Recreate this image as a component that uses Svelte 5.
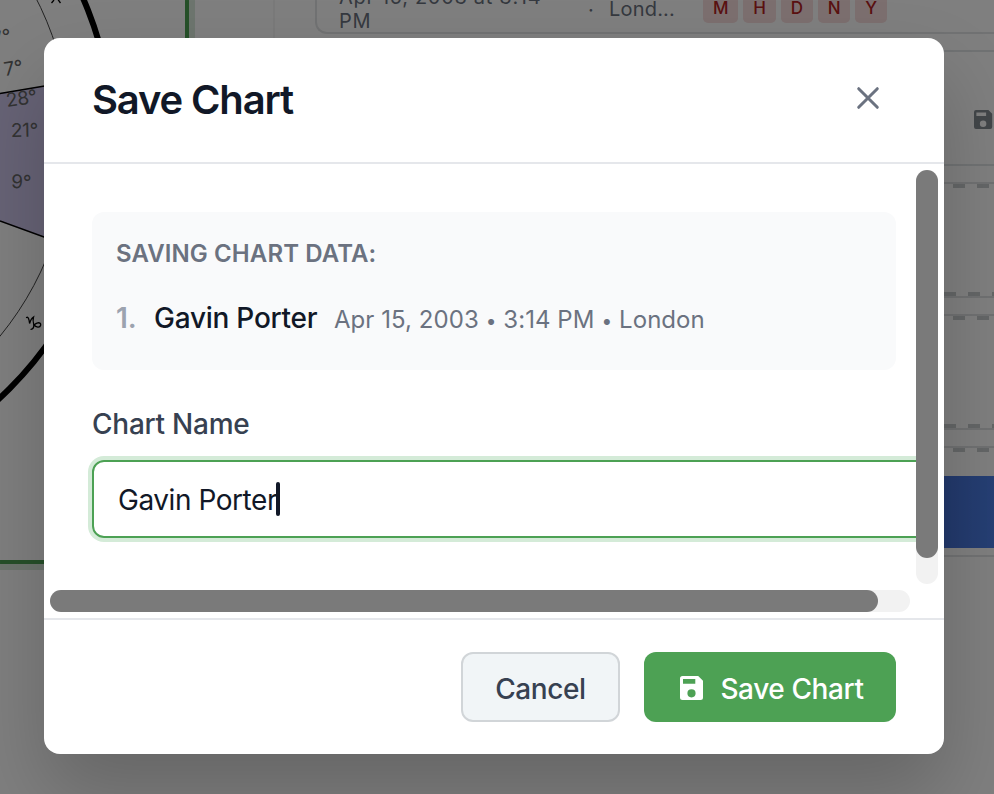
<script>
  let chartName = $state('Gavin Porter');
  const levels = ['M', 'H', 'D', 'N', 'Y'];
  const degrees = [
    { x: -6, y: 46, t: '7°', r: -14 },
    { x: 5, y: 76, t: '7°', r: -9 },
    { x: 7, y: 107, t: '28°', r: -8 },
    { x: 11, y: 137, t: '21°', r: -1 },
    { x: 11, y: 188, t: '9°', r: 2 }
  ];
</script>

{#snippet disk()}
  <svg class="disk" viewBox="0 0 24 24" aria-hidden="true">
    <path fill="currentColor" fill-rule="evenodd" d="M2.500 0h15.700L23 4.800V21.500a2.500 2.500 0 0 1-2.500 2.500h-18A2.500 2.500 0 0 1 0 21.500v-19A2.500 2.500 0 0 1 2.500 0Zm.5 3v4.700h12.300V3Zm8.500 10.200a4.100 4.100 0 1 0 0 8.200 4.100 4.100 0 0 0 0-8.200Z" />
  </svg>
{/snippet}

<div class="screen">
  <div class="page">
    <section class="wheel">
      <svg width="185" height="560" viewBox="0 0 185 560">
        <path d="M0 93 44 86 92 78V254L44 237 0 221Z" fill="#cec6ed" />
        <path d="M0 93.500 92 78M0 221l92 33.500" stroke="#000" stroke-width="1.5" fill="none" />
        <circle cx="-239.3" cy="139.7" r="309.6" fill="none" stroke="#444" stroke-width="1" />
        <circle cx="-239.3" cy="139.7" r="352" fill="none" stroke="#000" stroke-width="6" />
        {#each degrees as d}
          <text x={d.x} y={d.y} transform="rotate({d.r} {d.x} {d.y})">{d.t}</text>
        {/each}
        <path d="M51.500 3 54 0M60.500 3 58-.5M53-1h7" fill="none" stroke="#000" stroke-width="1.3" />
        <path d="M26.500 317.500Q28.800 316 29.600 323.500Q31 318.500 33.500 317Q32.500 320 33.800 325Q34 329 31 329.300M33.800 326C35 322.300 41 321.500 40.700 325C40 328.300 36 327.500 33.800 324.500" fill="none" stroke="#000" stroke-width="1.3" stroke-linecap="round" />
      </svg>
    </section>
    <section class="side">
      <div class="entry">
        <span class="when">Apr 15, 2003 at 3:14 PM</span>
        <span class="sep">·</span>
        <span class="place">Lond...</span>
        <span class="tags">{#each levels as l}<b>{l}</b>{/each}</span>
      </div>
      <div class="tools">{@render disk()}</div>
      <div class="slot"></div>
      <div class="slot"></div>
      <div class="slot last"></div>
      <div class="action"></div>
      <div class="rule"></div>
    </section>
  </div>

  <div class="overlay">
    <div class="modal" role="dialog" aria-label="Save Chart">
      <header>
        <h2>Save Chart</h2>
        <button class="close" aria-label="Close">
          <svg width="24" height="24" viewBox="0 0 24 24"><path d="M2.700 2.700 21.300 21.300M21.300 2.700 2.700 21.300" stroke="#6b7280" stroke-width="3" stroke-linecap="round" /></svg>
        </button>
      </header>
      <div class="body">
        <div class="content">
          <div class="summary">
            <div class="caption">SAVING CHART DATA:</div>
            <div class="row">
              <span class="num">1.</span>
              <span class="name">Gavin Porter</span>
              <span class="info">Apr 15, 2003 <em>•</em> 3:14 PM <em>•</em> London</span>
            </div>
          </div>
          <div class="label">Chart Name</div>
          <div class="field"><span>{chartName}</span><i></i></div>
        </div>
        <div class="vbar"><div></div></div>
        <div class="hbar"><div></div></div>
      </div>
      <footer>
        <button class="cancel"><span>Cancel</span></button>
        <button class="save">{@render disk()}<span>Save Chart</span></button>
      </footer>
    </div>
  </div>
</div>

<style>
  :global(body) { margin: 0; }
  .screen, .screen * { box-sizing: border-box; }
  .screen { position: relative; width: 994px; height: 794px; overflow: hidden; font-family: Inter, "Liberation Sans", sans-serif; }
  button { font: inherit; padding: 0; border: 0; background: none; }
  svg { display: block; flex: none; }

  .page { display: flex; height: 794px; background: #fff; }
  .wheel { width: 189px; height: 564px; border: solid #4ca153; border-width: 0 4px 4px 0; box-shadow: 0 0 0 6px #dbeadd; flex: none; }
  .wheel text { font-size: 19px; letter-spacing: -.3px; fill: #666; }
  .side { width: 721px; flex: none; margin-left: 84px; border-left: 2px solid #f4f4f4; height: 558px; }
  .entry { display: flex; align-items: flex-start; height: 34px; margin-left: 40px; border: solid #e3e5e6; border-width: 0 0 2px 2px; border-radius: 0 0 0 12px; font-size: 20px; line-height: 24px; color: #6b7280; letter-spacing: .4px; }
  .when { width: 215px; margin: -15px 31px 0 22px; flex: none; letter-spacing: .7px; }
  .sep { margin: -2px 0 0 3px; width: 21px; flex: none; }
  .place { margin-top: -3px; width: 93px; flex: none; letter-spacing: .2px; }
  .tags { display: flex; gap: 5px; margin-left: 1px; }
  .tags b { display: block; height: 23px; padding: 0 9.9px; line-height: 17px; font-size: 17px; font-weight: 500; letter-spacing: 0; color: #b42323; background: #f9dede; border-radius: 0 0 5px 5px; }
  .tools { display: flex; align-items: flex-start; height: 116px; margin-top: 16px; border: solid #e1e4e6; border-width: 2px 0; padding: 58px 0 0 699px; color: #858c93; }
  .tools .disk { width: 19px; height: 19px; }
  .slot { height: 116px; margin-top: 16px; border: solid #e1e3e5; border-width: 2px 0; padding: 1px 0;
    background: repeating-linear-gradient(90deg, #c9cccf 0 12px, transparent 12px 24px) 678px 0 / 100% 4px no-repeat, repeating-linear-gradient(90deg, #c9cccf 0 12px, transparent 12px 24px) 669px 100% / 100% 4px no-repeat; }
  .last { height: 30px; border-bottom: 0; background-size: 100% 4px, 0 0; }
  .action { height: 72px; background: linear-gradient(90deg, #4672d8 93%, #4c80ea); }
  .rule { height: 9px; border-bottom: 2px solid #e3e4e6; }

  .overlay { position: absolute; inset: 0; background: rgba(0, 0, 0, .5); display: flex; justify-content: center; align-items: flex-start; padding-top: 38px; }
  .modal { display: flex; flex-direction: column; width: 900px; height: 716px; margin-right: 6px; border-radius: 16px; background: #fff; box-shadow: 0 40px 80px rgba(0, 0, 0, .2); }
  header { display: flex; justify-content: space-between; align-items: center; height: 126px; border-bottom: 2px solid #e5e7eb; padding: 0 64px 0 48px; }
  h2 { margin: 0; font-size: 40px; line-height: 48px; font-weight: 600; letter-spacing: -1.15px; color: #111827; }
  .close { margin-top: -4px; }
  .body { display: grid; grid-template: 420px 34px / 872px 28px; height: 454px; }
  .content { overflow: hidden; padding: 48px 0 0 48px; }
  .summary { width: 804px; height: 158px; padding: 28px 24px; border-radius: 12px; background: #f9fafb; }
  .caption { font-size: 24px; line-height: 28px; font-weight: 600; letter-spacing: .1px; color: #6b7280; }
  .row { display: flex; align-items: baseline; margin-top: 33px; line-height: 34px; white-space: nowrap; }
  .num { width: 38px; font-size: 28px; font-weight: 600; color: #9ca3af; }
  .name { width: 180px; font-size: 28px; font-weight: 500; letter-spacing: -.25px; color: #111827; }
  .info { font-size: 24px; letter-spacing: .05px; color: #6b7280; }
  .info em { display: inline-block; width: 11px; text-align: center; font-style: normal; font-size: 19px; }
  .label { margin-top: 36px; font-size: 28px; line-height: 36px; font-weight: 500; letter-spacing: -.25px; color: #374151; }
  .field { display: flex; align-items: center; width: 900px; height: 78px; margin-top: 18px; padding: 2px 0 0 24px; border: 2px solid #4ca154; border-radius: 12px; box-shadow: 0 0 0 4px #d4ebd8; font-size: 28px; letter-spacing: -.45px; color: #111827; }
  .field i { width: 4px; height: 34px; margin: -2px 0 0 -1px; border-radius: 2px; background: #111827; }
  .vbar { width: 22px; height: 414px; margin-top: 6px; border-radius: 11px; background: #f2f2f2; }
  .vbar div { height: 388px; border-radius: 11px; background: #7a7a7a; }
  .hbar { width: 860px; height: 22px; margin: 6px 0 0 6px; border-radius: 11px; background: #f2f2f2; }
  .hbar div { width: 828px; height: 22px; border-radius: 11px; background: #7a7a7a; }
  footer { display: flex; justify-content: flex-end; gap: 24px; height: 136px; padding: 32px 48px; border-top: 2px solid #e5e7eb; }
  footer button { display: flex; align-items: center; justify-content: center; height: 70px; border-radius: 12px; font-size: 28px; font-weight: 500; letter-spacing: -.4px; }
  footer button span { padding-top: 3px; }
  .cancel { width: 159px; border: 2px solid #d1d5d8; background: #f1f5f7; color: #374151; }
  .save { width: 252px; gap: 16px; padding-left: 4px; background: #4da154; color: #fff; }
  .save .disk { width: 24px; height: 24px; margin-top: 1px; }
</style>
